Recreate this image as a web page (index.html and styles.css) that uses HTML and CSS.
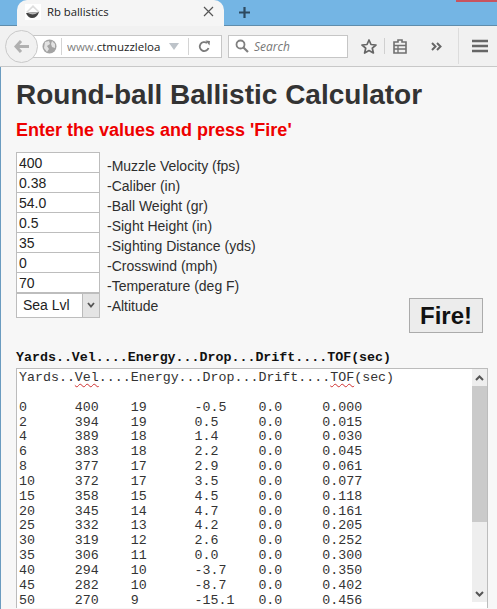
FILE: index.html
```html
<!DOCTYPE html>
<html lang="en">
<head>
<meta charset="utf-8">
<title>Rb ballistics</title>
<link rel="stylesheet" href="styles.css">
</head>
<body>
<header class="chrome">
  <div class="tabbar">
    <div class="tab">
      <svg class="favicon" width="16" height="16" viewBox="0 0 16 16"><rect width="16" height="16" fill="#fff"/><path d="M8 1 L15 8 L13 8 L8 3.500 L3 8 L1 8Z" fill="#ddd"/><path d="M1 9 Q8 8 14 8 Q12 14 7 14 Q3 14 1 9Z" fill="#444"/><path d="M3 9 Q8 12 13 8.500 L14 8 L3 8.500Z" fill="#bbb"/></svg>
      <span class="tab-title">Rb ballistics</span>
      <svg class="tab-close" width="11" height="11" viewBox="0 0 11 11"><path d="M1 1 L10 10 M10 1 L1 10" stroke="#555" stroke-width="1.200" fill="none"/></svg>
    </div>
    <svg class="newtab" width="13" height="13" viewBox="0 0 13 13"><path d="M6.500 1 V12 M1 6.500 H12" stroke="#2d4a60" stroke-width="2.200" fill="none"/></svg>
    <div class="winctl"></div>
  </div>
  <div class="toolbar">
    <div class="urlbar">
      <svg class="globe" width="15" height="15" viewBox="0 0 15 15"><circle cx="7.500" cy="7.500" r="7" fill="#a3a3a3"/><path d="M3 3 L7 2 L8 5 L5 7 L7 10 L5 13 L2 9Z M10 2 L13 5 L13 9 L10 8 L9 5Z" fill="#e2e2e2"/></svg>
      <span class="sep"></span>
      <span class="url"><span class="url-dim">www.</span>ctmuzzleloa</span>
      <svg class="dropmark" width="10" height="7" viewBox="0 0 10 7"><path d="M0 0 H10 L5 7Z" fill="#bdc3c9"/></svg>
      <span class="sep sep-r"></span>
      <svg class="reload" width="13" height="13" viewBox="0 0 13 13"><path d="M10.500 8 A4.500 4.500 0 1 1 9 3" stroke="#7b7b7b" stroke-width="1.800" fill="none"/><path d="M7.500 0.500 L12 1 L11.500 5.500Z" fill="#7b7b7b"/></svg>
    </div>
    <div class="backbtn"><svg width="16" height="13" viewBox="0 0 16 13"><path d="M7 1 L2 6.500 L7 12 M2 6.500 H15" stroke="#b0b0b0" stroke-width="3" fill="none"/></svg></div>
    <div class="searchbar">
      <svg width="14" height="14" viewBox="0 0 14 14"><circle cx="5.500" cy="5.500" r="4" stroke="#808080" stroke-width="1.800" fill="none"/><path d="M8.500 8.500 L13 13" stroke="#808080" stroke-width="2.200"/></svg>
      <span class="search-text">Search</span>
    </div>
    <svg class="star" width="16" height="15" viewBox="0 0 16 15"><path d="M8 1 L10 5.500 L15 6 L11.300 9.200 L12.400 14 L8 11.500 L3.600 14 L4.700 9.200 L1 6 L6 5.500Z" stroke="#666" stroke-width="1.700" fill="none" stroke-linejoin="round"/></svg>
    <span class="vsep"></span>
    <svg class="clip" width="14" height="15" viewBox="0 0 14 15"><path d="M1 3 H5 V1 H9 V3 H13 V14 H1Z" stroke="#707070" stroke-width="1.600" fill="none"/><path d="M1 6.500 H13 M1 10 H13 M5 6 V14" stroke="#707070" stroke-width="1.300" fill="none"/></svg>
    <svg class="more" width="12" height="9" viewBox="0 0 12 9"><path d="M1 1 L4.500 4.500 L1 8 M6 1 L9.500 4.500 L6 8" stroke="#666" stroke-width="2" fill="none"/></svg>
    <span class="vsep vsep-tall"></span>
    <svg class="menu" width="16" height="14" viewBox="0 0 16 14"><path d="M0 2 H16 M0 7 H16 M0 12 H16" stroke="#666" stroke-width="2.500"/></svg>
  </div>
</header>
<main class="page">
  <h1 class="title">Round-ball Ballistic Calculator</h1>
  <h2 class="prompt">Enter the values and press 'Fire'</h2>
  <form class="calc">
    <div class="fields">
      <div class="field"><input class="num" value="400"><label>-Muzzle Velocity (fps)</label></div>
      <div class="field"><input class="num" value="0.38"><label>-Caliber (in)</label></div>
      <div class="field"><input class="num" value="54.0"><label>-Ball Weight (gr)</label></div>
      <div class="field"><input class="num" value="0.5"><label>-Sight Height (in)</label></div>
      <div class="field"><input class="num" value="35"><label>-Sighting Distance (yds)</label></div>
      <div class="field"><input class="num" value="0"><label>-Crosswind (mph)</label></div>
      <div class="field"><input class="num" value="70"><label>-Temperature (deg F)</label></div>
      <div class="field field-alt">
        <div class="selectbox"><span class="select-val">Sea Lvl</span><span class="select-btn"><svg width="8" height="6" viewBox="0 0 8 6"><path d="M1 1 L4 4.500 L7 1" stroke="#555" stroke-width="1.800" fill="none"/></svg></span></div>
        <label>-Altitude</label>
      </div>
    </div>
    <button class="fire" type="button">Fire!</button>
  </form>
  <div class="headline">Yards..Vel....Energy...Drop...Drift....TOF(sec)</div>
  <div class="output">
    <pre class="table">Yards..<span class="typo">Vel</span>....Energy...Drop...Drift....<span class="typo">TOF</span>(sec)

0      400    19      -0.5    0.0     0.000
2      394    19      0.5     0.0     0.015
4      389    18      1.4     0.0     0.030
6      383    18      2.2     0.0     0.045
8      377    17      2.9     0.0     0.061
10     372    17      3.5     0.0     0.077
15     358    15      4.5     0.0     0.118
20     345    14      4.7     0.0     0.161
25     332    13      4.2     0.0     0.205
30     319    12      2.6     0.0     0.252
35     306    11      0.0     0.0     0.300
40     294    10      -3.7    0.0     0.350
45     282    10      -8.7    0.0     0.402
50     270    9       -15.1   0.0     0.456</pre>
    <div class="scrollbar">
      <svg class="arrow" width="9" height="6" viewBox="0 0 9 6"><path d="M1 5 L4.500 1.500 L8 5" stroke="#555" stroke-width="2" fill="none"/></svg>
      <div class="thumb"></div>
      <div class="track"></div>
      <svg class="arrow" width="9" height="6" viewBox="0 0 9 6"><path d="M1 1 L4.500 4.500 L8 1" stroke="#555" stroke-width="2" fill="none"/></svg>
    </div>
  </div>
</main>
</body>
</html>
```
FILE: styles.css
```css
html, body { margin: 0; padding: 0; height: 609px; overflow: hidden; }
body { font-family: "Liberation Sans", Arial, sans-serif; background: #f7f7f7; color: #2e2e2e; }

.chrome { height: 67px; display: flex; flex-direction: column; }
.tabbar { height: 25px; background: #74b5e4; border-bottom: 1px solid #5f8dac; display: flex; align-items: flex-start; position: relative; }
.tab { width: 207px; margin-left: 17px; height: 26px; background: #f5f5f5; border-radius: 10px 10px 0 0; display: flex; align-items: center; padding: 0 10px 3px 8px; box-sizing: border-box; }
.favicon { flex: none; }
.tab-title { font-family: "Open Sans", sans-serif; font-size: 11.300px; color: #222; margin-left: 6px; flex: 1; }
.tab-close { flex: none; }
.newtab { margin: 6px 0 0 14px; }
.winctl { position: absolute; top: 0; right: 0; width: 41px; height: 2px; background: #c8545f; }

.toolbar { height: 41px; box-sizing: border-box; background: #f1f1f1; border-bottom: 1px solid #c8c8c8; display: flex; align-items: center; position: relative; padding-left: 28px; }
.urlbar { width: 194px; height: 23px; box-sizing: border-box; background: #fff; border: 1px solid #c6c6c6; display: flex; align-items: center; padding-left: 13px; flex: none; }
.globe { flex: none; }
.sep { width: 1px; height: 17px; background: #d4d4d4; margin: 0 5px 0 4px; flex: none; }
.sep-r { margin: 0 9px 0 9px; }
.url { font-family: "Open Sans", sans-serif; font-size: 11.500px; color: #222; white-space: nowrap; width: 94px; overflow: hidden; flex: none; }
.url-dim { color: #808080; }
.dropmark { flex: none; margin-left: 8px; }
.reload { flex: none; }
.backbtn { position: absolute; left: 5px; top: 4px; width: 31px; height: 31px; border-radius: 50%; background: #f1f1f1; border: 1px solid #c9c9c9; display: flex; align-items: center; justify-content: center; }
.searchbar { margin-left: 6px; width: 120px; height: 23px; box-sizing: border-box; background: #fff; border: 1px solid #c6c6c6; display: flex; align-items: center; padding-left: 6px; gap: 5px; flex: none; }
.search-text { font-family: "Open Sans", sans-serif; font-style: italic; font-size: 12px; color: #777; }
.star { margin-left: 13px; flex: none; }
.vsep { width: 1px; height: 16px; background: #d0d0d0; margin: 0 8px 0 7px; flex: none; }
.clip { flex: none; }
.more { margin-left: 24px; flex: none; }
.vsep-tall { height: 36px; margin: 0 13px 0 15px; background: #dcdcdc; }
.menu { flex: none; }

.page { height: 542px; box-sizing: border-box; padding: 12px 9px 0 15px; border-left: 1px solid #6b9cc0; overflow: hidden; }
.title { margin: 0; font-size: 28px; line-height: 31px; font-weight: bold; color: #333; }
.prompt { margin: 9px 0 0; font-size: 18px; line-height: 22px; font-weight: bold; color: #ee0000; }

.calc { margin-top: 11px; display: flex; justify-content: space-between; align-items: flex-end; padding-right: 5px; }
.fields { display: flex; flex-direction: column; }
.field { display: flex; align-items: center; height: 20px; }
.field label { font-size: 14px; color: #2e2e2e; margin-left: 7px; position: relative; top: 4px; }
.num { width: 84px; height: 21px; box-sizing: border-box; margin: 0 0 -1px; padding: 1px 2px 0; border: 1px solid #bdbdbd; background: #fff; font: 14px "Liberation Sans", Arial, sans-serif; color: #222; outline: none; border-radius: 0; }
.field-alt { height: 26px; }
.selectbox { width: 84px; height: 25px; box-sizing: border-box; background: #fff; border: 1px solid #bdbdbd; display: flex; align-items: center; justify-content: space-between; flex: none; }
.select-val { font-size: 14px; color: #222; margin-left: 6px; }
.select-btn { width: 16px; height: 23px; background: #e4e4e4; border-left: 1px solid #bbb; display: flex; align-items: center; justify-content: center; }
.field-alt label { top: 1px; }

.fire { width: 74px; height: 35px; margin-bottom: -15px; padding: 0; border: 1px solid #ababab; background: #ececec; font: bold 24px "Liberation Sans", Arial, sans-serif; color: #111; border-radius: 0; }

.headline { margin-top: 32px; font: bold 13.300px/16px "Liberation Mono", "Courier New", monospace; color: #111; }
.output { margin-top: 2px; height: 240px; box-sizing: border-box; width: 472px; background: #fff; border: 1px solid #bcbcbc; border-bottom: 0; display: flex; justify-content: space-between; align-items: flex-start; overflow: hidden; }
.table { margin: 0; padding: 2px 0 0 2px; font: 13.300px/14.850px "Liberation Mono", "Courier New", monospace; color: #333; white-space: pre; }
.typo { text-decoration: underline wavy #d03030 1px; text-underline-offset: 2px; }
.scrollbar { width: 15px; height: 233px; background: #eee; display: flex; flex-direction: column; align-items: center; flex: none; }
.scrollbar .arrow { margin: 6px 0 5px; flex: none; }
.thumb { width: 15px; height: 136px; background: #cacaca; flex: none; }
.track { flex: 1; }
```
